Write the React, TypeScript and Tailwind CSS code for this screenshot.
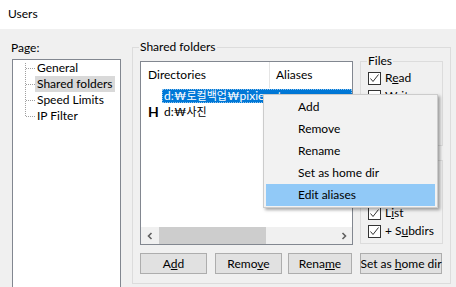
import type { ReactNode } from "react";

function Check({ label, checked = true }: { label: ReactNode; checked?: boolean }) {
  return (
    <div className="flex h-[18px] items-center">
      <span className="flex h-[13px] w-[13px] shrink-0 items-center justify-center border border-[#333333] bg-white">
        {checked && (
          <svg width="11" height="11" viewBox="0 0 11 11">
            <path d="M1.5 5.5 L4 8.5 L9.5 1.5" fill="none" stroke="#333333" strokeWidth="1" />
          </svg>
        )}
      </span>
      <span className="ml-[4px] whitespace-nowrap">{label}</span>
    </div>
  );
}

function Btn({ children, className }: { children: ReactNode; className: string }) {
  return (
    <div className={"flex h-[21px] items-center justify-center whitespace-nowrap border border-[#adadad] bg-[#e1e1e1] " + className}>
      <span>{children}</span>
    </div>
  );
}

export default function App() {
  const tree = ["General", "Shared folders", "Speed Limits", "IP Filter"];
  const menu = ["Add", "Remove", "Rename", "Set as home dir", "Edit aliases"];

  return (
    <div className="relative h-[287px] w-[456px] overflow-hidden whitespace-nowrap bg-[#f0f0f0] font-['Lato','Noto_Sans_CJK_KR',sans-serif] text-[12px] leading-[16px] text-black">
      {/* title */}
      <div className="h-[29px] bg-white pl-[8px] pt-[6px]">Users</div>

      <div className="flex">
        {/* PAGE TREE */}
        <div className="ml-[12px] w-[109px] shrink-0">
          <div className="-ml-px mt-[11px]">Page:</div>
          <div className="relative mt-[3px] h-[240px] border border-[#828790] bg-white">
            <svg className="absolute left-0 top-0" width="30" height="60">
              <g stroke="#a0a0a0" strokeWidth="1" strokeDasharray="1 1">
                <line x1="12.5" y1="3" x2="12.5" y2="57" />
                <line x1="13" y1="8.5" x2="22" y2="8.5" />
                <line x1="13" y1="24.5" x2="22" y2="24.5" />
                <line x1="13" y1="40.5" x2="22" y2="40.5" />
                <line x1="13" y1="56.5" x2="22" y2="56.5" />
              </g>
            </svg>
            {tree.map((t) => (
              <div key={t} className="flex h-[16px] pl-[22px]">
                <span className={"px-[2px] " + (t === "Shared folders" ? "bg-[#d9d9d9]" : "")}>{t}</span>
              </div>
            ))}
          </div>
        </div>

        {/* SHARED FOLDERS GROUP */}
        <fieldset className="ml-[11px] mt-[10px] h-[245px] w-[318px] shrink-0 border border-[#dcdcdc] px-[7px] pt-[6px]">
          <legend className="-ml-px px-px">Shared folders</legend>

          <div className="flex">
            {/* list */}
            <div className="flex h-[184px] w-[213px] shrink-0 flex-col overflow-hidden border border-[#828790] bg-white">
              <div className="flex h-[26px] items-center">
                <div className="flex h-full w-[129px] items-center border-r border-[#e5e5e5] pl-[7px]">Directories</div>
                <div className="pl-[6px]">Aliases</div>
              </div>
              <div className="h-[16px]">
                <div className="ml-[21px] mt-px flex h-[14px] items-center border border-dotted border-[#8fc1ea] bg-[#0078d7] pl-px text-white">
                  <span>
                    d:₩<span className="text-[11px]">로컬백업</span>₩pixienet
                  </span>
                </div>
              </div>
              <div className="flex h-[16px] items-center">
                <span className="ml-[7px] w-[9px] text-[14px] font-bold">H</span>
                <span className="ml-[7px]">
                  d:₩<span className="text-[11px]">사진</span>
                </span>
              </div>

              {/* scrollbar */}
              <div className="mt-auto flex h-[17px] bg-[#f0f0f0]">
                <div className="flex w-[17px] items-center justify-center">
                  <svg width="8" height="8" viewBox="0 0 8 8">
                    <path d="M5.5 1 L2.5 4 L5.5 7" fill="none" stroke="#606060" strokeWidth="1.6" />
                  </svg>
                </div>
                <div className="ml-px w-[107px] bg-[#cdcdcd]" />
                <div className="flex-1" />
                <div className="flex w-[17px] items-center justify-center">
                  <svg width="8" height="8" viewBox="0 0 8 8">
                    <path d="M2.5 1 L5.5 4 L2.5 7" fill="none" stroke="#606060" strokeWidth="1.6" />
                  </svg>
                </div>
              </div>
            </div>

            {/* permissions */}
            <div className="ml-[7px] flex w-[83px] shrink-0 flex-col">
              <fieldset className="-mt-[8px] h-[93px] border border-[#dcdcdc] px-[7px]">
                <legend className="-ml-px px-px">Files</legend>
                <Check label={<>R<u>e</u>ad</>} />
                <Check label={<><u>W</u>rite</>} checked={false} />
                <Check label={<><u>D</u>elete</>} checked={false} />
                <Check label={<><u>A</u>ppend</>} checked={false} />
              </fieldset>
              <fieldset className="mt-[6px] h-[92px] border border-[#dcdcdc] px-[7px]">
                <legend className="-ml-px px-px">Directories</legend>
                <Check label={<><u>C</u>reate</>} checked={false} />
                <Check label={<>De<u>l</u>ete</>} checked={false} />
                <Check label={<>L<u>i</u>st</>} />
                <Check label={<>+ S<u>u</u>bdirs</>} />
              </fieldset>
            </div>
          </div>

          {/* buttons */}
          <div className="mt-[8px] flex">
            <Btn className="w-[67px]">A<u>d</u>d</Btn>
            <Btn className="ml-[8px] w-[67px]">Remo<u>v</u>e</Btn>
            <Btn className="ml-[6px] w-[64px]">Rena<u>m</u>e</Btn>
            <Btn className="ml-[8px] w-[82px]">Set as <u>h</u>ome dir</Btn>
          </div>
        </fieldset>
      </div>

      {/* CONTEXT MENU */}
      <div className="absolute left-[263px] top-[94px] w-[175px] border border-[#cccccc] bg-[#f2f2f2] px-[2px] py-px shadow-[2px_2px_3px_rgba(0,0,0,0.35)]">
        {menu.map((m) => (
          <div
            key={m}
            className={"flex h-[22px] items-center pl-[32px] " + (m === "Edit aliases" ? "bg-[#91c9f7]" : "")}
          >
            {m}
          </div>
        ))}
      </div>
    </div>
  );
}
